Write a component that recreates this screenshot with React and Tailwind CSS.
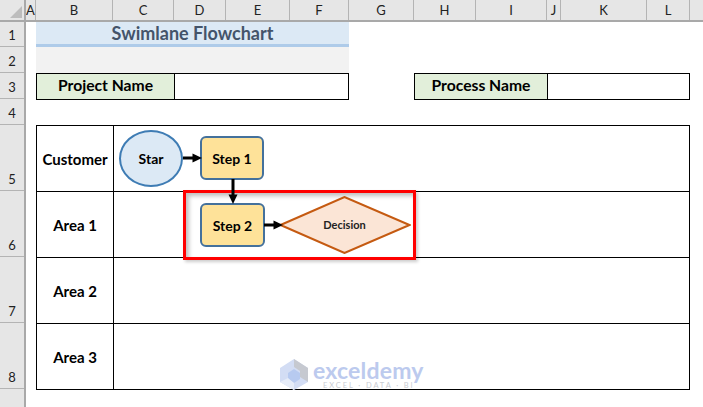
const colHeads = [
  ["A", "w-[10px]"],
  ["B", "w-[77px]"],
  ["C", "w-[61px]"],
  ["D", "w-[52px]"],
  ["E", "w-[64px]"],
  ["F", "w-[59px]"],
  ["G", "w-[65px]"],
  ["H", "w-[62px]"],
  ["I", "w-[71px]"],
  ["J", "w-[14px]"],
  ["K", "w-[86px]"],
  ["L", "w-[43px]"],
]

const rowHeads = [
  ["1", "h-[25px]"],
  ["2", "h-[26px]"],
  ["3", "h-[26px]"],
  ["4", "h-[26px]"],
  ["5", "h-[66px]"],
  ["6", "h-[66px]"],
  ["7", "h-[66px]"],
  ["8", "h-[66px]"],
]

function Arrow({ className, vertical }) {
  return (
    <svg className={className} viewBox={vertical ? "0 0 12 26" : "0 0 20 12"}>
      {vertical ? (
        <>
          <path d="M6 0V18" stroke="#000" strokeWidth="3" />
          <path d="M1.5 15.5H10.5L6 25Z" fill="#000" />
        </>
      ) : (
        <>
          <path d="M0 6H12" stroke="#000" strokeWidth="3" />
          <path d="M9.5 1.5L19 6L9.5 10.5Z" fill="#000" />
        </>
      )}
    </svg>
  )
}

function Lane({ name, last }) {
  return (
    <div className={`flex w-[654px] border-t border-black ${last ? "border-b h-[67px]" : "h-[66px]"}`}>
      <div className="w-[78px] flex items-center justify-center pt-[1px] border-x border-black text-[15px] font-bold text-black">{name}</div>
      <div className="w-[576px] border-r border-black"></div>
    </div>
  )
}

export default function App() {
  return (
    <div className="relative w-[703px] h-[407px] overflow-hidden bg-white font-['Lato','Liberation_Sans',sans-serif]">
      <div className="flex h-[22px] bg-[#e6e6e6] border-b-2 border-[#a9a9a9]">
        <div className="relative w-[26px] border-r-2 border-[#a9a9a9]">
          <svg className="absolute left-[9px] top-[5px]" width="14" height="14" viewBox="0 0 14 14">
            <path d="M13 1V13H1Z" fill="#bdbdbd" />
          </svg>
        </div>
        {colHeads.map(([label, width]) => (
          <div key={label} className={`${width} flex items-center justify-center border-r border-[#b4b4b4] text-[13px] leading-none text-[#222]`}>
            {label}
          </div>
        ))}
      </div>

      <div className="flex">
        <div className="w-[26px] bg-[#e6e6e6] border-r-2 border-[#a9a9a9] h-[385px]">
          {rowHeads.map(([label, height]) => (
            <div key={label} className={`${height} flex items-end justify-center pb-[1px] border-b border-[#b4b4b4] text-[13px] leading-[20px] text-[#222]`}>
              {label}
            </div>
          ))}
        </div>

        <div className="pl-[10px] w-[677px]">
          <div className="w-[313px] h-[25px] bg-[#dce9f5] border-b-[3px] border-[#aecbe9] flex items-center justify-center text-[18px] font-bold text-[#44546a] leading-none">
            Swimlane Flowchart
          </div>
          <div className="w-[313px] h-[26px] bg-[#f2f2f2]"></div>
          <div className="flex h-[27px]">
            <div className="flex w-[313px] border border-black">
              <div className="w-[138px] bg-[#e2efda] border-r border-black flex items-center justify-center pb-[1px] text-[15.7px] font-bold text-black">Project Name</div>
              <div className="flex-1"></div>
            </div>
            <div className="flex ml-[65px] w-[276px] border border-black">
              <div className="w-[133px] bg-[#e2efda] border-r border-black flex items-center justify-center pb-[1px] text-[15.7px] font-bold text-black">Process Name</div>
              <div className="flex-1"></div>
            </div>
          </div>
          <div className="h-[25px]"></div>
          <Lane name="Customer" />
          <Lane name="Area 1" />
          <Lane name="Area 2" />
          <Lane name="Area 3" last />
        </div>
      </div>

      {/* flowchart shapes sit on top of the sheet */}
      <div className="absolute left-[119px] top-[130px] w-[64px] h-[57px] rounded-[50%] bg-[#dce9f5] border-2 border-[#3e7cb4] flex items-center justify-center text-[14px] font-bold text-black">Star</div>
      <div className="absolute left-[200px] top-[136px] w-[64px] h-[44px] rounded-[6px] bg-[#fee299] border-2 border-[#44719c] flex items-center justify-center text-[14px] font-bold text-black">Step 1</div>
      <div className="absolute left-[183px] top-[190px] w-[233px] h-[70px] border-[3px] border-[#ff0000] shadow-[inset_3px_3px_4px_rgba(0,0,0,0.25),2px_2px_3px_rgba(0,0,0,0.2)]"></div>
      <div className="absolute left-[200px] top-[203px] w-[65px] h-[44px] rounded-[6px] bg-[#fee299] border-2 border-[#44719c] flex items-center justify-center text-[14px] font-bold text-black">Step 2</div>

      <svg className="absolute left-[279px] top-[196px]" width="132" height="58" viewBox="0 0 132 58">
        <path d="M1.5 29L65.5 1L130.5 29L65.5 57Z" fill="#fbe5d6" stroke="#c55a11" strokeWidth="2" />
      </svg>
      <div className="absolute left-[280px] top-[196px] w-[129px] h-[58px] flex items-center justify-center text-[11px] font-bold text-[#222]">Decision</div>

      <Arrow className="absolute left-[183px] top-[152px] w-[20px] h-[12px]" />
      <Arrow className="absolute left-[227px] top-[179px] w-[12px] h-[26px]" vertical />
      <Arrow className="absolute left-[264px] top-[219px] w-[20px] h-[12px]" />

      {/* watermark */}
      <div className="absolute left-[280px] top-[359px] flex items-start">
        <svg width="28" height="31" viewBox="0 0 28 31">
          <path d="M14 0L28 9V23L14 31L0 23V9Z" fill="#d3ddf4" />
          <path d="M14 0L28 9V23L20 18V12L14 8Z" fill="#c6c9d0" />
          <path d="M8 14L14 10L20 14V20L14 24L8 20Z" fill="#b7caf0" />
          <path d="M0 23L8 19L14 24V31Z" fill="#e6ecf8" />
        </svg>
        <div className="ml-[5px] flex flex-col">
          <span className="h-[23px] text-[23px] leading-[22px] font-bold text-[#bccaee] tracking-[0.2px]">exceldemy</span>
          <span className="h-[7px] text-[7.5px] leading-[7px] text-[#c9ccd2] tracking-[1.9px] ml-[10px]">EXCEL · DATA · BI</span>
        </div>
      </div>
    </div>
  )
}
